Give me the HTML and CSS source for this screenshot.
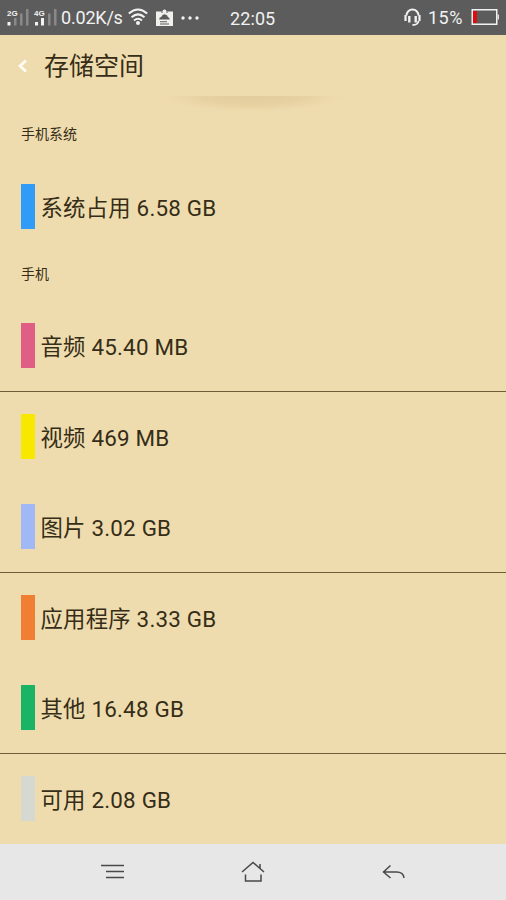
FILE: index.html
```html
<!DOCTYPE html>
<html lang="zh-CN">
<head>
<meta charset="utf-8">
<title>存储空间</title>
<link rel="stylesheet" href="styles.css">
</head>
<body>
<header class="status">
  <svg class="signals" width="50" height="19" viewBox="0 0 50 19">
    <path d="M7 10h2.500v7.500H7zM13 5.500h2.500v12H13zM19 1h2.500v16.500H19zM41 5.500h2.500v12H41zM47 1h2.500v16.500H47z" fill="#898989"/>
    <path d="M.5 14h3v3.500h-3zM28 14h3v3.500h-3zM34 10h3v7.500h-3z" fill="#f2f2f2"/>
    <text class="net" x="0" y="7.500">2G</text><text class="net" x="27" y="7.500">4G</text>
  </svg>
  <span class="speed">0.02K/s</span>
  <svg class="wifi" width="20" height="18" viewBox="0 0 20 18" fill="none" stroke="#f2f2f2" stroke-width="2">
    <path d="M.8 5.500Q10-2.500 19.200 5.500M3.500 9.300Q10 3.500 16.500 9.300M6 12.500Q10 9 14 12.500"/><circle cx="10" cy="15" r="2" fill="#f2f2f2" stroke="none"/>
  </svg>
  <svg class="badge" width="17" height="18" viewBox="0 0 17 18">
    <path d="M0 2.500h6.500q0-2 2-2t2 2H17V17H0z" fill="#f0f0ec"/><path d="M5 2.800h2v.8H5zM10 2.800h2v.8h-2z" fill="#5c5c5c"/>
    <path d="M3.200 10.500Q3 8.200 5.200 8Q6.500 4.800 9.500 5.500Q11.800 6 11.800 8Q14 8.500 13.700 10.500zM4 12.300h7v1H4zM4 14.500h9v1H4z" fill="#5c5c5c"/>
  </svg>
  <svg class="dots" width="18" height="4" viewBox="0 0 18 4" fill="#f2f2f2"><circle cx="2" cy="2" r="1.700"/><circle cx="9" cy="2" r="1.700"/><circle cx="16" cy="2" r="1.700"/></svg>
  <span class="time">22:05</span>
  <svg class="headset" width="17" height="19" viewBox="0 0 17 19" fill="none" stroke="#f2f2f2">
    <path d="M2.500 7.500a6 6 0 0 1 12 0M14.500 13q-.5 4-6 4" stroke-width="1.900"/><path d="M1.500 7v6M15.500 7v6" stroke-width="2.200"/><path d="M5.300 8v6.500M11.700 8v6.500" stroke-width="2.400"/>
  </svg>
  <span class="percent">15%</span>
  <svg class="battery" width="28" height="16" viewBox="0 0 28 16"><rect x="1.250" y=".75" width="24.500" height="14.500" fill="none" stroke="#f2f2f2" stroke-width="1.500"/><path d="M26.500 5.500H28v5h-1.500z" fill="#ddd"/><path d="M2 2h3.800v12H2z" fill="#e5080c"/></svg>
</header>
<div class="title">
  <svg width="9" height="14" viewBox="0 0 9 14" fill="none" stroke="#fffdf6" stroke-width="2.800"><path d="M8 1.500 2 7l6 5.500"/></svg>
  <h1>存储空间</h1>
</div>
<main>
  <div class="shade"></div>
  <h2 class="first">手机系统</h2>
  <div class="row"><i class="swatch blue"></i><span>系统占用 6.58 GB</span></div>
  <h2>手机</h2>
  <div class="row line"><i class="swatch pink"></i><span>音频 45.40 MB</span></div>
  <div class="row"><i class="swatch yellow"></i><span>视频 469 MB</span></div>
  <div class="row line"><i class="swatch peri"></i><span>图片 3.02 GB</span></div>
  <div class="row"><i class="swatch orange"></i><span>应用程序 3.33 GB</span></div>
  <div class="row line"><i class="swatch green"></i><span>其他 16.48 GB</span></div>
  <div class="row"><i class="swatch gray"></i><span>可用 2.08 GB</span></div>
</main>
<nav>
  <svg width="24" height="24" viewBox="0 0 24 24"><path d="M0 5.500h23M5 11.500h18M5 17.500h18"/></svg>
  <svg width="24" height="24" viewBox="0 0 24 24"><path d="M1 12 12 2.500 23 12M19 8V4M4.500 14.500V21h15.500v-6.500"/></svg>
  <svg width="24" height="24" viewBox="0 0 24 24"><path d="M9.500 5.500 2.500 12l7 6M3 12H15.500q7 0 7.500 6"/></svg>
</nav>
</body>
</html>
```
FILE: styles.css
```css
* { box-sizing: border-box; }
body {
  margin: 0;
  width: 506px;
  height: 900px;
  display: flex;
  flex-direction: column;
  overflow: hidden;
  background: #efdcae;
  color: #352d17;
  font-family: Roboto, "Noto Sans CJK SC", sans-serif;
}
svg { flex: none; display: block; }
.status {
  height: 35px;
  flex: none;
  display: flex;
  align-items: center;
  padding-left: 7px;
  background: #5c5c5c;
  color: #f2f2f2;
  font-size: 18px;
  line-height: 34px;
  white-space: nowrap;
}
.signals { overflow: visible; }
.net { font: bold 8px "Liberation Sans", sans-serif; fill: #f2f2f2; }
.speed { width: 62px; margin-left: 4px; margin-right: 5px; letter-spacing: -0.2px; }
.wifi { margin-top: -1px; }
.badge { margin-left: 8px; }
.dots { margin-left: 8px; }
.time { width: 48px; margin-left: 31px; margin-top: 2px; letter-spacing: 0.1px; }
.headset { margin-left: 126px; }
.percent { width: 36px; margin-left: 7px; margin-right: 7px; letter-spacing: 0.5px; }
.battery { margin-top: -1px; }
.title {
  height: 61px;
  flex: none;
  display: flex;
  align-items: center;
  padding-left: 18px;
}
h1 { margin: 3px 0 0 17px; font-size: 25px; font-weight: 400; line-height: 58px; }
main { flex: none; height: 748px; }
.shade {
  width: 180px;
  height: 16px;
  margin: 0 auto;
  background: radial-gradient(ellipse 90px 16px at 50% 0, #e2cb9c, #e7d1a2 55%, #efdcae);
}
h2 { margin: 0; padding-left: 21px; height: 49px; font-size: 14px; font-weight: 400; line-height: 43px; }
h2.first { height: 50px; line-height: 44px; }
.row {
  height: 90.5px;
  display: flex;
  align-items: center;
  padding-left: 21px;
  font-size: 22.4px;
  line-height: 34px;
}
.row span { margin: 2px 0 0 5.5px; white-space: nowrap; letter-spacing: 0.2px; }
.line { border-bottom: 1px solid #6f5c38; }
.swatch { width: 14px; height: 45px; margin-bottom: 2px; }
.blue { background: #319bf8; }
.pink { background: #e05d86; }
.yellow { background: #f8e800; }
.peri { background: #a0b9f6; }
.orange { background: #f07f33; }
.green { background: #1bb467; }
.gray { background: #d5d9d1; }
nav {
  height: 56px;
  flex: none;
  display: flex;
  justify-content: space-between;
  align-items: center;
  padding: 0 101px;
  background: #e7e7e7;
}
nav path { fill: none; stroke: #484a47; stroke-width: 1.5; }
```
